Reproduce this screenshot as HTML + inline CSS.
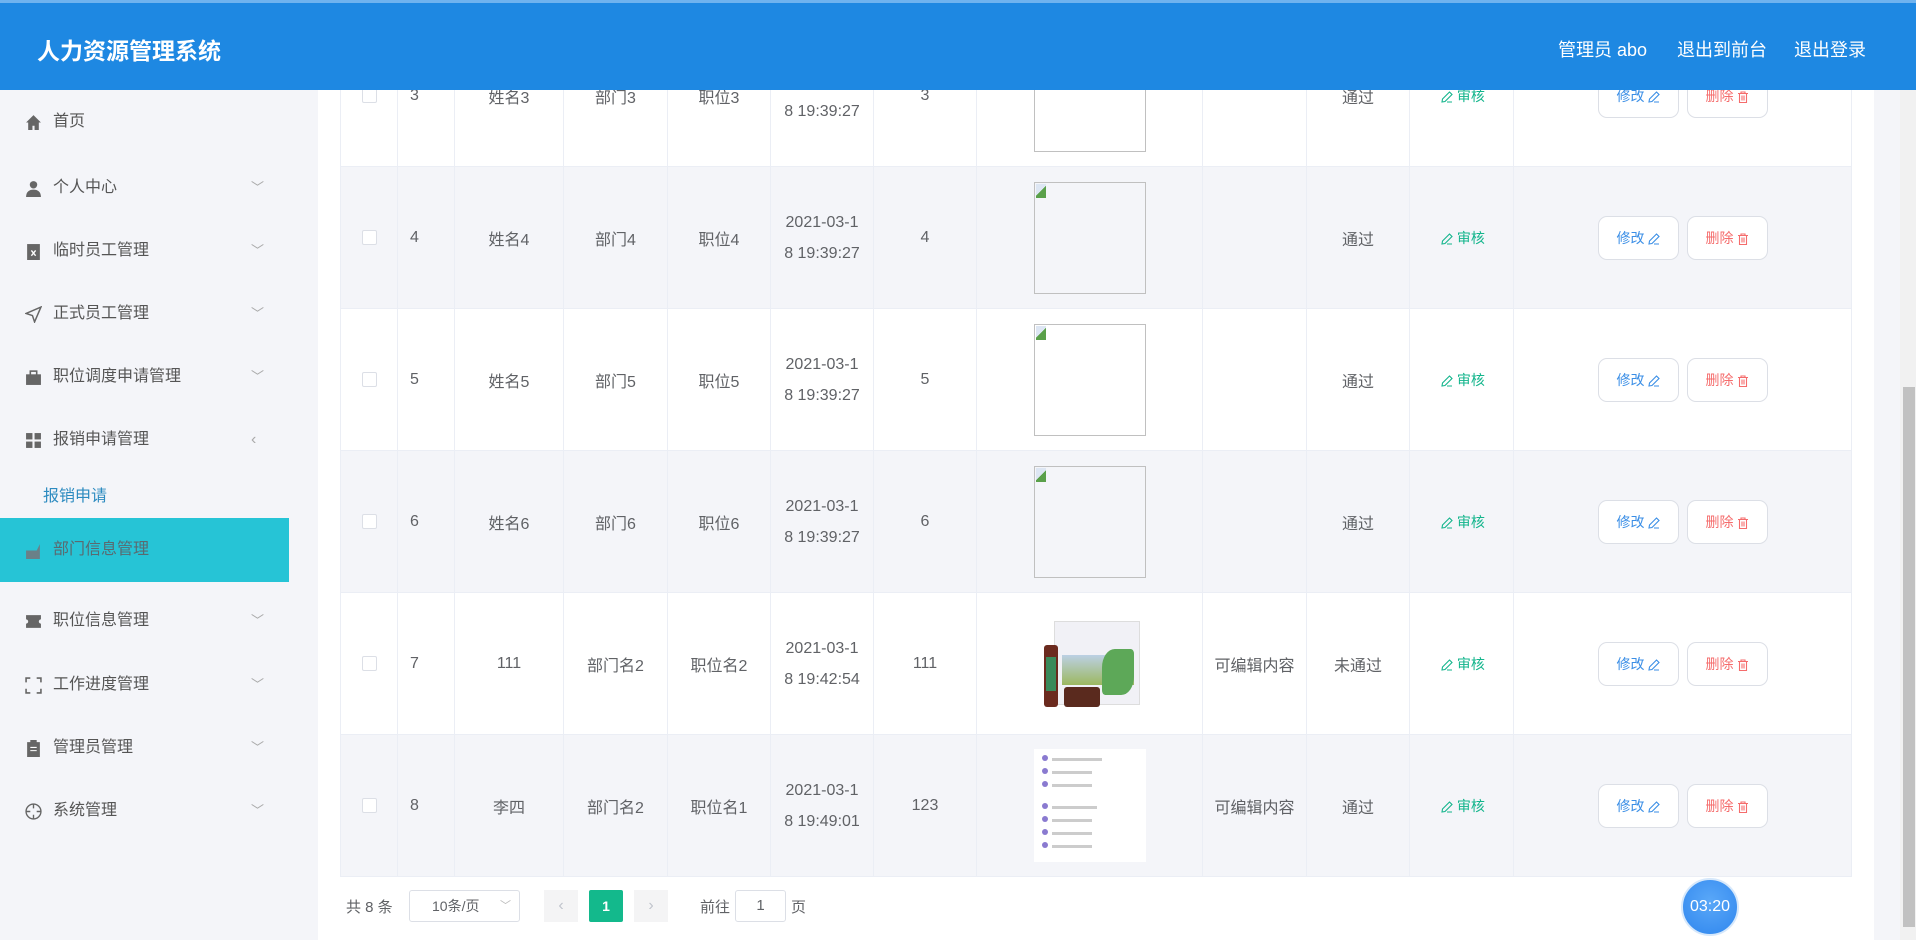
<!DOCTYPE html>
<html><head><meta charset="utf-8"><style>
*{margin:0;padding:0;box-sizing:border-box}
body{width:1916px;height:940px;overflow:hidden;background:#f4f5f9;font-family:"Liberation Sans","Noto Sans CJK SC",sans-serif;position:relative;color:#606266}
.hdr{position:absolute;left:0;top:0;width:1916px;height:90px;background:#1e88e2;border-top:3px solid #6fb3ef;z-index:5}
.hdr .t{position:absolute;left:37px;top:29px;font-size:23px;font-weight:bold;color:#fff}
.hdr .r{position:absolute;top:33px;font-size:18px;color:#fff}
.side{position:absolute;left:0;top:90px;width:289px;height:850px;background:#f4f5f9}
.mi{position:absolute;left:0;width:289px;height:40px;font-size:16px;color:#555;line-height:40px}
.mi .ic{position:absolute;left:25px;top:12px;width:17px;height:17px}
.mi .tx{position:absolute;left:53px}
.mi .ar{position:absolute;left:251px;top:0;color:#aaa;font-size:13px}
.main{position:absolute;left:318px;top:90px;width:1556px;height:850px;background:#fff}
table{position:absolute;left:340px;top:24px;width:1511px;border-collapse:collapse;table-layout:fixed;font-size:16px}
td{border:1px solid #ebeef5;height:142px;text-align:center;color:#606266;padding:0}
td.ix{text-align:left;padding-left:12px}
tr.g td{background:#f4f5f9}
.cb{display:inline-block;width:15px;height:15px;border:1px solid #dcdfe6;border-radius:2px;background:#fff;vertical-align:middle}
.dt{line-height:31px}
.pic{display:inline-block;width:112px;height:112px;border:1px solid #c0c0c0;position:relative;vertical-align:middle;background:transparent}
.pic:before{content:"";position:absolute;left:1px;top:1px;width:10px;height:14px;background:linear-gradient(135deg,#dde6f3 50%,#5aa04a 50%)}
.sh{color:#13b58c;font-size:14px}
.btn{display:inline-block;width:81px;height:44px;border:1px solid #dcdfe6;border-radius:9px;background:#fff;line-height:42px;font-size:14px;margin:0 4px;vertical-align:middle}
.btn svg,.sh svg{vertical-align:-2px;margin-left:3px}
.sb{position:absolute;left:1900px;top:90px;width:16px;height:850px;background:#f1f1f1}
.th{position:absolute;left:1903px;top:387px;width:12px;height:540px;background:#c1c1c1}
</style></head><body>
<svg width="0" height="0" style="position:absolute"><defs>
<symbol id="pen" viewBox="0 0 12 12"><path d="M8.5 1l2.5 2.5L4 10.5 1 11l.5-3z" fill="none" stroke="currentColor" stroke-width="1.1"/><path d="M6 11h5" stroke="currentColor" stroke-width="1"/></symbol>
<symbol id="bin" viewBox="0 0 12 12"><path d="M1 2.5h10M4 2.5V1h4v1.5M2.5 2.5v9h7v-9M5 4.5v5M7 4.5v5" fill="none" stroke="currentColor" stroke-width="1.1"/></symbol>
</defs></svg>
<div class="hdr"><div class="t">人力资源管理系统</div>
<div class="r" style="left:1558px">管理员 abo</div><div class="r" style="left:1677px">退出到前台</div><div class="r" style="left:1794px">退出登录</div></div>
<div class="side">
<div class="mi" style="top:12px"><svg class="ic" viewBox="0 0 16 16"><path d="M8 1L1 8h2v7h4v-4h2v4h4V8h2z" fill="#666"/></svg><span class="tx">首页</span></div>
<div class="mi" style="top:78px"><svg class="ic" viewBox="0 0 16 16"><circle cx="8" cy="4.5" r="3.5" fill="#666"/><path d="M1 16c0-5 3-7 7-7s7 2 7 7z" fill="#666"/></svg><span class="tx">个人中心</span><span class="ar">﹀</span></div>
<div class="mi" style="top:141px"><svg class="ic" viewBox="0 0 16 16"><rect x="2" y="1" width="12" height="15" fill="#666"/><path d="M6 7l4 5M10 7l-4 5" stroke="#fff" stroke-width="1.3"/></svg><span class="tx">临时员工管理</span><span class="ar">﹀</span></div>
<div class="mi" style="top:204px"><svg class="ic" viewBox="0 0 16 16"><path d="M15 1L1 7l6 2 2 6z" fill="none" stroke="#666" stroke-width="1.4"/></svg><span class="tx">正式员工管理</span><span class="ar">﹀</span></div>
<div class="mi" style="top:267px"><svg class="ic" viewBox="0 0 16 16"><rect x="1" y="5" width="14" height="10" fill="#666"/><rect x="5" y="2" width="6" height="4" fill="none" stroke="#666" stroke-width="1.5"/></svg><span class="tx">职位调度申请管理</span><span class="ar">﹀</span></div>
<div class="mi" style="top:330px"><svg class="ic" viewBox="0 0 16 16"><rect x="1" y="1" width="6" height="6" fill="#666"/><rect x="9" y="1" width="6" height="6" fill="#666"/><rect x="1" y="9" width="6" height="6" fill="#666"/><rect x="9" y="9" width="6" height="6" fill="#666"/></svg><span class="tx">报销申请管理</span><span class="ar" style="font-size:16px">‹</span></div>
<div class="mi" style="top:387px;color:#2d8bc0"><span class="tx" style="left:43px">报销申请</span></div>
<div class="mi" style="top:428px;height:64px;line-height:64px;background:#26c4d6;color:#5a6a70"><svg class="ic" style="top:24px" viewBox="0 0 16 16"><path d="M1 8h10l3-6v14H1z" fill="#6a8088"/></svg><span class="tx">部门信息管理</span></div>
<div class="mi" style="top:511px"><svg class="ic" viewBox="0 0 16 16"><path d="M1 2h14v4a2 2 0 000 4v4H1v-4a2 2 0 000-4z" fill="#666"/></svg><span class="tx">职位信息管理</span><span class="ar">﹀</span></div>
<div class="mi" style="top:575px"><svg class="ic" viewBox="0 0 16 16"><path d="M1 5V1h4M11 1h4v4M15 11v4h-4M5 15H1v-4" fill="none" stroke="#666" stroke-width="1.5"/></svg><span class="tx">工作进度管理</span><span class="ar">﹀</span></div>
<div class="mi" style="top:638px"><svg class="ic" viewBox="0 0 16 16"><rect x="2" y="2" width="12" height="14" fill="#666"/><rect x="5" y="0" width="6" height="3" fill="#666"/><path d="M5 7h6M5 10h6" stroke="#fff"/></svg><span class="tx">管理员管理</span><span class="ar">﹀</span></div>
<div class="mi" style="top:701px"><svg class="ic" viewBox="0 0 16 16"><circle cx="8" cy="8" r="7" fill="none" stroke="#666" stroke-width="1.3"/><path d="M8 1v4M8 11v4M1 8h4M11 8h4" stroke="#666" stroke-width="1.3"/></svg><span class="tx">系统管理</span><span class="ar">﹀</span></div>
</div>
<div class="main"></div>
<table>
<colgroup><col style="width:57px"><col style="width:57px"><col style="width:109px"><col style="width:104px"><col style="width:103px"><col style="width:103px"><col style="width:103px"><col style="width:226px"><col style="width:104px"><col style="width:103px"><col style="width:104px"><col style="width:338px"></colgroup>
<tr><td><span class="cb"></span></td><td class="ix">3</td><td>姓名3</td><td>部门3</td><td>职位3</td><td class="dt">2021-03-1<br>8 19:39:27</td><td>3</td><td><span class="pic"></span></td><td></td><td>通过</td><td class="sh"><svg width="12" height="12"><use href="#pen"/></svg> 审核</td><td><span class="btn" style="color:#3a8ee6">修改<svg width="12" height="12"><use href="#pen"/></svg></span><span class="btn" style="color:#f56c6c">删除<svg width="12" height="12"><use href="#bin"/></svg></span></td></tr>
<tr class="g"><td><span class="cb"></span></td><td class="ix">4</td><td>姓名4</td><td>部门4</td><td>职位4</td><td class="dt">2021-03-1<br>8 19:39:27</td><td>4</td><td><span class="pic"></span></td><td></td><td>通过</td><td class="sh"><svg width="12" height="12"><use href="#pen"/></svg> 审核</td><td><span class="btn" style="color:#3a8ee6">修改<svg width="12" height="12"><use href="#pen"/></svg></span><span class="btn" style="color:#f56c6c">删除<svg width="12" height="12"><use href="#bin"/></svg></span></td></tr>
<tr><td><span class="cb"></span></td><td class="ix">5</td><td>姓名5</td><td>部门5</td><td>职位5</td><td class="dt">2021-03-1<br>8 19:39:27</td><td>5</td><td><span class="pic"></span></td><td></td><td>通过</td><td class="sh"><svg width="12" height="12"><use href="#pen"/></svg> 审核</td><td><span class="btn" style="color:#3a8ee6">修改<svg width="12" height="12"><use href="#pen"/></svg></span><span class="btn" style="color:#f56c6c">删除<svg width="12" height="12"><use href="#bin"/></svg></span></td></tr>
<tr class="g"><td><span class="cb"></span></td><td class="ix">6</td><td>姓名6</td><td>部门6</td><td>职位6</td><td class="dt">2021-03-1<br>8 19:39:27</td><td>6</td><td><span class="pic"></span></td><td></td><td>通过</td><td class="sh"><svg width="12" height="12"><use href="#pen"/></svg> 审核</td><td><span class="btn" style="color:#3a8ee6">修改<svg width="12" height="12"><use href="#pen"/></svg></span><span class="btn" style="color:#f56c6c">删除<svg width="12" height="12"><use href="#bin"/></svg></span></td></tr>
<tr><td><span class="cb"></span></td><td class="ix">7</td><td>111</td><td>部门名2</td><td>职位名2</td><td class="dt">2021-03-1<br>8 19:42:54</td><td>111</td><td><div style="display:inline-block;width:112px;height:98px;position:relative;vertical-align:middle"><div style="position:absolute;left:20px;top:6px;width:86px;height:84px;background:#f1f1f6;border:1px solid #ddd"></div><div style="position:absolute;left:28px;top:40px;width:72px;height:30px;background:linear-gradient(#bcd0e4,#9cb860)"></div><div style="position:absolute;left:68px;top:34px;width:32px;height:46px;background:#5da858;border-radius:40% 10%"></div><div style="position:absolute;left:10px;top:30px;width:14px;height:62px;background:#6b2a1e;border-radius:3px"></div><div style="position:absolute;left:12px;top:42px;width:10px;height:34px;background:#3a8a5a"></div><div style="position:absolute;left:30px;top:72px;width:36px;height:20px;background:#5a2a1e;border-radius:3px"></div></div></td><td>可编辑内容</td><td>未通过</td><td class="sh"><svg width="12" height="12"><use href="#pen"/></svg> 审核</td><td><span class="btn" style="color:#3a8ee6">修改<svg width="12" height="12"><use href="#pen"/></svg></span><span class="btn" style="color:#f56c6c">删除<svg width="12" height="12"><use href="#bin"/></svg></span></td></tr>
<tr class="g"><td><span class="cb"></span></td><td class="ix">8</td><td>李四</td><td>部门名2</td><td>职位名1</td><td class="dt">2021-03-1<br>8 19:49:01</td><td>123</td><td><div style="display:inline-block;width:112px;height:113px;background:#fff;vertical-align:middle;padding:6px 8px;text-align:left;line-height:0">
<div style="height:13px"><span style="display:inline-block;width:6px;height:6px;border-radius:3px;background:#8a7ad0"></span><span style="display:inline-block;margin-left:4px;width:50px;height:3px;background:#ccc"></span></div>
<div style="height:13px"><span style="display:inline-block;width:6px;height:6px;border-radius:3px;background:#8a7ad0"></span><span style="display:inline-block;margin-left:4px;width:40px;height:3px;background:#ccc"></span></div>
<div style="height:22px"><span style="display:inline-block;width:6px;height:6px;border-radius:3px;background:#8a7ad0"></span><span style="display:inline-block;margin-left:4px;width:40px;height:3px;background:#ccc"></span></div>
<div style="height:13px"><span style="display:inline-block;width:6px;height:6px;border-radius:3px;background:#8a7ad0"></span><span style="display:inline-block;margin-left:4px;width:45px;height:3px;background:#ccc"></span></div>
<div style="height:13px"><span style="display:inline-block;width:6px;height:6px;border-radius:3px;background:#8a7ad0"></span><span style="display:inline-block;margin-left:4px;width:40px;height:3px;background:#ccc"></span></div>
<div style="height:13px"><span style="display:inline-block;width:6px;height:6px;border-radius:3px;background:#8a7ad0"></span><span style="display:inline-block;margin-left:4px;width:40px;height:3px;background:#ccc"></span></div>
<div style="height:13px"><span style="display:inline-block;width:6px;height:6px;border-radius:3px;background:#8a7ad0"></span><span style="display:inline-block;margin-left:4px;width:40px;height:3px;background:#ccc"></span></div>
</div></td><td>可编辑内容</td><td>通过</td><td class="sh"><svg width="12" height="12"><use href="#pen"/></svg> 审核</td><td><span class="btn" style="color:#3a8ee6">修改<svg width="12" height="12"><use href="#pen"/></svg></span><span class="btn" style="color:#f56c6c">删除<svg width="12" height="12"><use href="#bin"/></svg></span></td></tr>
</table>
<div style="position:absolute;left:346px;top:896px;font-size:15px;color:#606266">共 8 条</div>
<div style="position:absolute;left:409px;top:890px;width:111px;height:32px;border:1px solid #dcdfe6;border-radius:3px;font-size:14px;line-height:30px;padding-left:22px;color:#606266">10条/页<span style="position:absolute;right:8px;color:#bbb;font-size:11px">﹀</span></div>
<div style="position:absolute;left:544px;top:890px;width:34px;height:32px;background:#f4f4f5;color:#c0c4cc;text-align:center;line-height:32px">‹</div>
<div style="position:absolute;left:589px;top:890px;width:34px;height:32px;background:#13b98c;color:#fff;text-align:center;line-height:32px;font-weight:bold;font-size:14px;border-radius:2px">1</div>
<div style="position:absolute;left:634px;top:890px;width:34px;height:32px;background:#f4f4f5;color:#c0c4cc;text-align:center;line-height:32px">›</div>
<div style="position:absolute;left:700px;top:896px;font-size:15px">前往</div>
<div style="position:absolute;left:735px;top:890px;width:51px;height:32px;border:1px solid #dcdfe6;border-radius:3px;text-align:center;line-height:30px;font-size:15px">1</div>
<div style="position:absolute;left:791px;top:896px;font-size:15px">页</div>
<div style="position:absolute;left:1681px;top:878px;width:58px;height:58px;border-radius:50%;background:radial-gradient(circle at 50% 40%,#5aa8f8,#2f86ee);border:2px solid #d6e8fb;color:#fff;text-align:center;line-height:54px;font-size:16px">03:20</div>
<div class="sb"></div><div class="th"></div>
</body></html>
